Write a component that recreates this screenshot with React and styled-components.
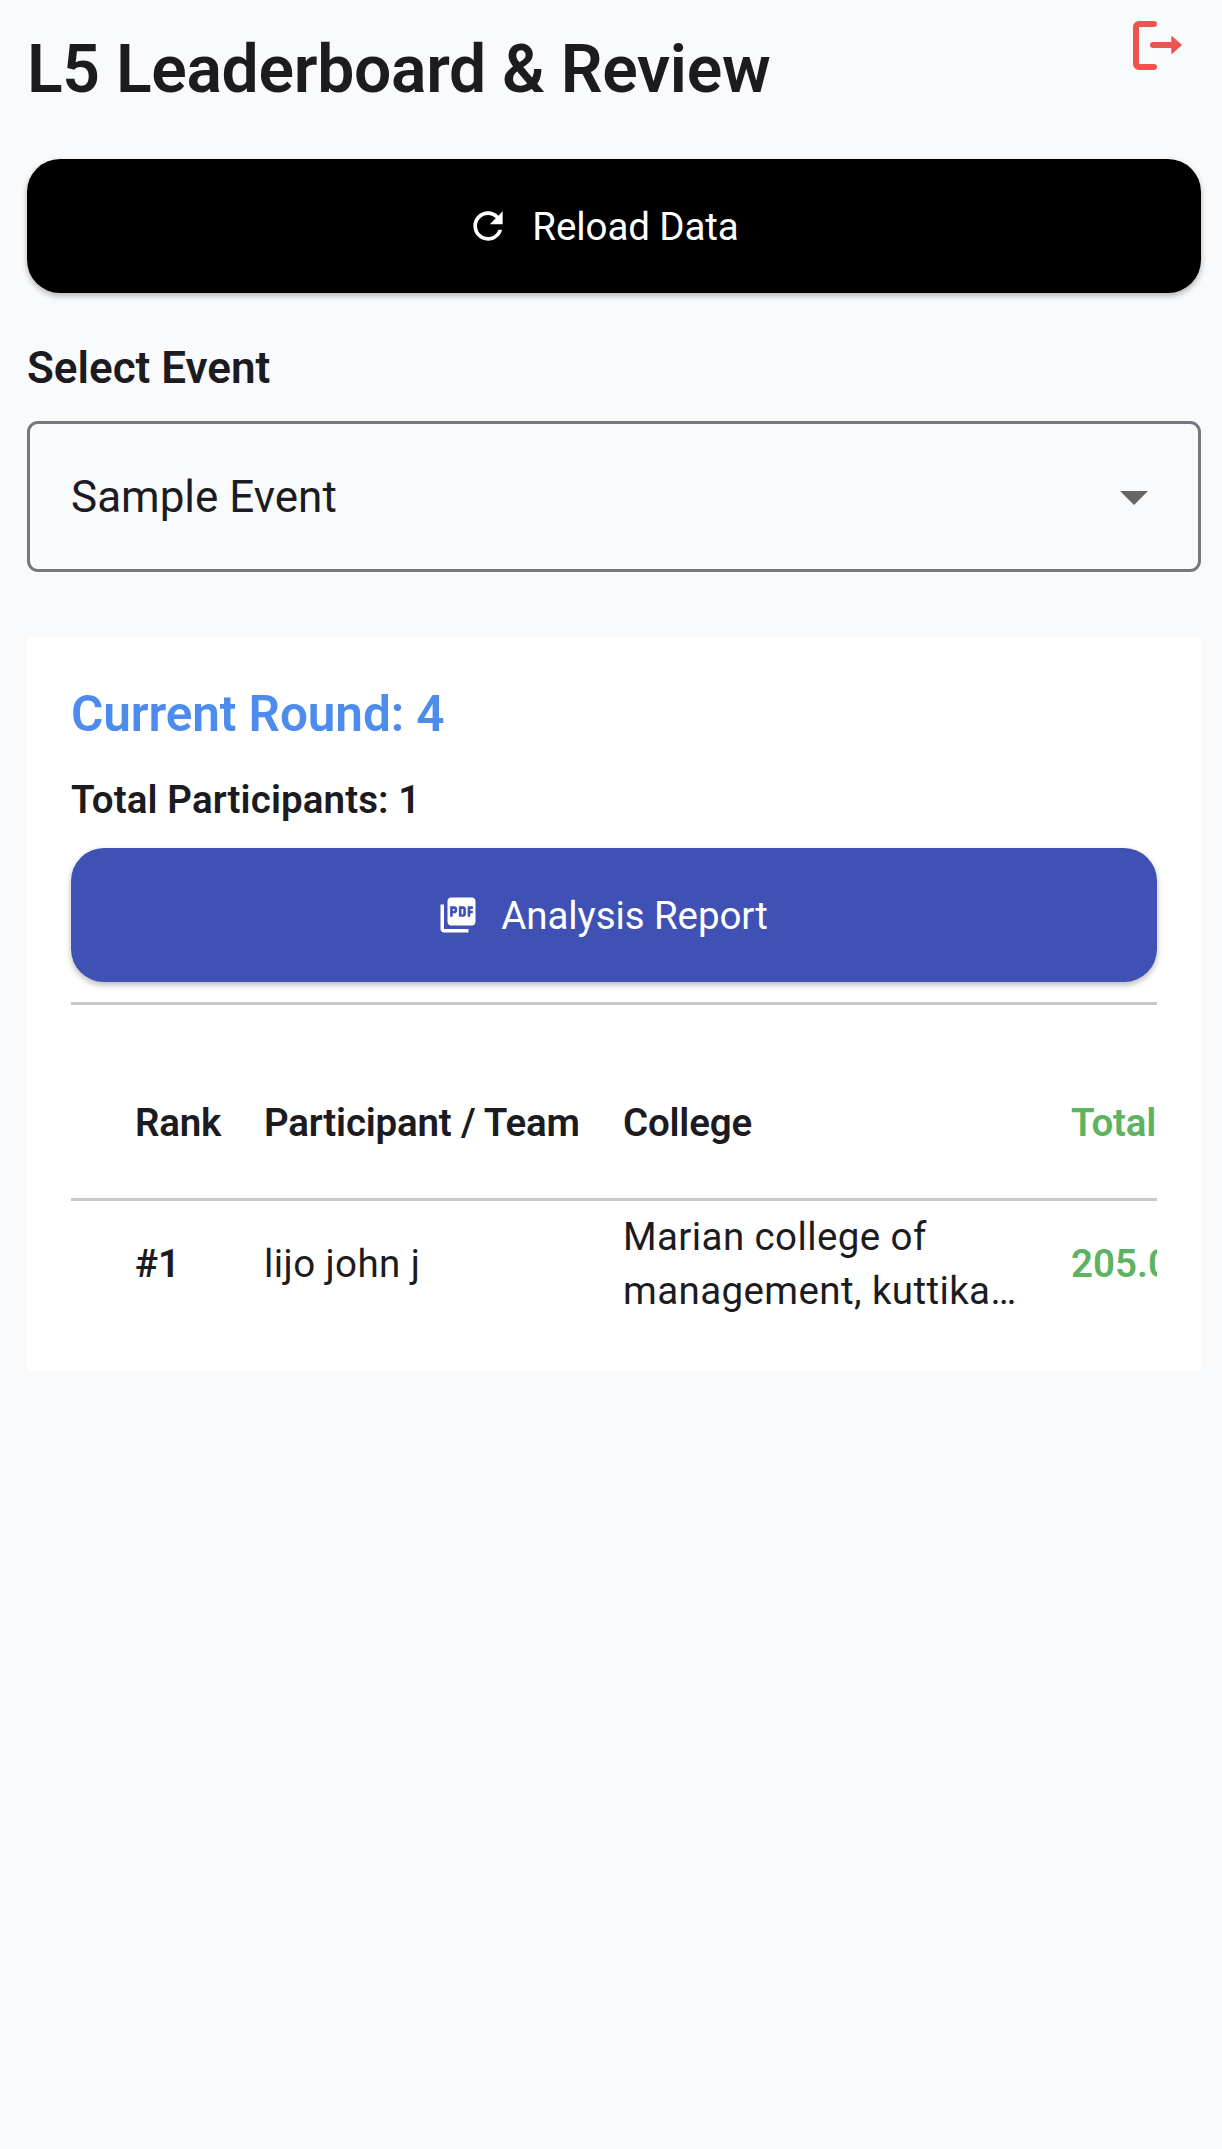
import React from 'react';
import styled, { createGlobalStyle } from 'styled-components';

const GlobalStyle = createGlobalStyle`
    html, body {
        margin: 0;
        padding: 0;
        background: #f9fafc;
    }

    * {
        box-sizing: border-box;
    }
`;

const Page = styled.div`
    width: 1222px;
    min-height: 2149px;
    padding: 0 21px 0 27px;
    background: #f9fafc;
    font-family: Roboto, sans-serif;
    color: #1b1b21;
`;

const Header = styled.header`
    display: flex;
    justify-content: space-between;
    align-items: flex-start;
    height: 159px;
`;

const Title = styled.h1`
    margin: 35px 0 0;
    font-size: 66px;
    line-height: 70px;
    font-weight: 600;
    letter-spacing: -0.3px;
`;

const LogoutButton = styled.button`
    display: flex;
    width: 66px;
    height: 66px;
    margin: 12px 10px 0 0;
    padding: 0;
    border: 0;
    background: none;
`;

const ActionButton = styled.button`
    display: flex;
    align-items: center;
    justify-content: center;
    gap: 22px;
    width: 100%;
    height: 134px;
    padding: 0 23px 0 0;
    border: 0;
    border-radius: 33px;
    background: ${props => props.$bg};
    box-shadow: 0 3px 6px rgba(0, 0, 0, 0.28);
    color: #fff;
    font-family: inherit;
    font-size: 38.5px;
    font-weight: 400;
    letter-spacing: -0.1px;
`;

const FieldLabel = styled.div`
    margin-top: 49px;
    font-size: 44px;
    line-height: 52px;
    font-weight: 600;
`;

const Select = styled.div`
    display: flex;
    align-items: center;
    justify-content: space-between;
    height: 151px;
    margin-top: 27px;
    padding: 0 50px 0 41px;
    border: 3px solid #74777f;
    border-radius: 11px;
    font-size: 44px;
`;

const Caret = styled.span`
    width: 0;
    height: 0;
    margin-top: 3px;
    border-left: 14px solid transparent;
    border-right: 14px solid transparent;
    border-top: 14px solid #666;
`;

const Card = styled.section`
    margin-top: 65px;
    padding: 45px 44px 44px;
    background: #fff;
`;

const RoundTitle = styled.h2`
    margin: 0;
    font-size: 49.5px;
    line-height: 64px;
    font-weight: 600;
    letter-spacing: -0.1px;
    color: #4d8cec;
`;

const Participants = styled.div`
    margin: 31px 0 25px;
    font-size: 38.5px;
    line-height: 46px;
    font-weight: 600;
    letter-spacing: 0.1px;
`;

const Divider = styled.hr`
    height: 3px;
    margin: 20px 0 42px;
    border: 0;
    background: #c7c7cc;
`;

const TableClip = styled.div`
    overflow: hidden;
`;

const Table = styled.table`
    width: 1200px;
    border-collapse: collapse;
    table-layout: fixed;
`;

const Th = styled.th`
    height: 152px;
    padding: 0 44px 0 0;
    border-bottom: 3px solid #c7c7cc;
    text-align: left;
    font-size: 38.5px;
    font-weight: 600;
    letter-spacing: -0.2px;
    color: ${props => props.$color || 'inherit'};
    white-space: nowrap;
    overflow: hidden;
`;

const Td = styled.td`
    height: 128px;
    padding: 0 44px 0 0;
    font-size: 38.5px;
    line-height: 54px;
    font-weight: ${props => props.$bold ? 600 : 400};
    letter-spacing: ${props => props.$bold ? 0 : '0.4px'};
    color: ${props => props.$color || 'inherit'};
`;

const RefreshIcon = () => (
    <svg width="44" height="44" viewBox="0 0 24 24" fill="#fff">
        <path d="M17.65 6.35C16.2 4.9 14.21 4 12 4c-4.42 0-7.99 3.58-7.99 8s3.57 8 7.99 8c3.73 0 6.84-2.55 7.73-6h-2.08c-.82 2.33-3.04 4-5.65 4-3.31 0-6-2.69-6-6s2.69-6 6-6c1.66 0 3.14.69 4.22 1.78L13 11h7V4l-2.35 2.35z" />
    </svg>
);

const PdfIcon = () => (
    <svg width="42" height="42" viewBox="0 0 24 24" fill="#fff">
        <path d="M20 2H8c-1.1 0-2 .9-2 2v12c0 1.1.9 2 2 2h12c1.1 0 2-.9 2-2V4c0-1.1-.9-2-2-2zm-8.5 7.5c0 .83-.67 1.5-1.5 1.5H9v2H7.5V7H10c.83 0 1.5.67 1.5 1.5v1zm5 2c0 .83-.67 1.5-1.5 1.5h-2.5V7H15c.83 0 1.5.67 1.5 1.5v3zm4-3H19v1h1.5V11H19v2h-1.5V7h3v1.5zM9 9.5h1v-1H9v1zM4 6H2v14c0 1.1.9 2 2 2h14v-2H4V6zm10 5.5h1v-3h-1v3z" />
    </svg>
);

const LogoutIcon = () => (
    <svg width="66" height="66" viewBox="0 0 66 66" fill="none">
        <path d="M29 12H14a3 3 0 0 0-3 3v37a3 3 0 0 0 3 3h15" stroke="#ef5350" strokeWidth="6" strokeLinecap="round" />
        <path d="M28 33h19" stroke="#ef5350" strokeWidth="6" strokeLinecap="round" />
        <path d="M47 25l9 8-9 8z" fill="#ef5350" stroke="#ef5350" strokeWidth="1.5" strokeLinejoin="round" />
    </svg>
);

const App = () => (
    <Page>
        <GlobalStyle />
        <Header>
            <Title>L5 Leaderboard &amp; Review</Title>
            <LogoutButton aria-label="Logout"><LogoutIcon /></LogoutButton>
        </Header>
        <ActionButton $bg="#000"><RefreshIcon />Reload Data</ActionButton>
        <FieldLabel>Select Event</FieldLabel>
        <Select>Sample Event<Caret /></Select>
        <Card>
            <RoundTitle>Current Round: 4</RoundTitle>
            <Participants>Total Participants: 1</Participants>
            <ActionButton $bg="#3f51b5"><PdfIcon />Analysis Report</ActionButton>
            <Divider />
            <TableClip>
                <Table>
                    <colgroup>
                        <col style={{ width: 64 }} />
                        <col style={{ width: 129 }} />
                        <col style={{ width: 359 }} />
                        <col style={{ width: 448 }} />
                        <col style={{ width: 200 }} />
                    </colgroup>
                    <thead>
                        <tr>
                            <Th />
                            <Th>Rank</Th>
                            <Th>Participant / Team</Th>
                            <Th>College</Th>
                            <Th $color="#5cb362">Total Score</Th>
                        </tr>
                    </thead>
                    <tbody>
                        <tr>
                            <Td />
                            <Td $bold>#1</Td>
                            <Td>lijo john j</Td>
                            <Td>Marian college of management, kuttika…</Td>
                            <Td $bold $color="#5cb362">205.00</Td>
                        </tr>
                    </tbody>
                </Table>
            </TableClip>
        </Card>
    </Page>
);

export default App;
